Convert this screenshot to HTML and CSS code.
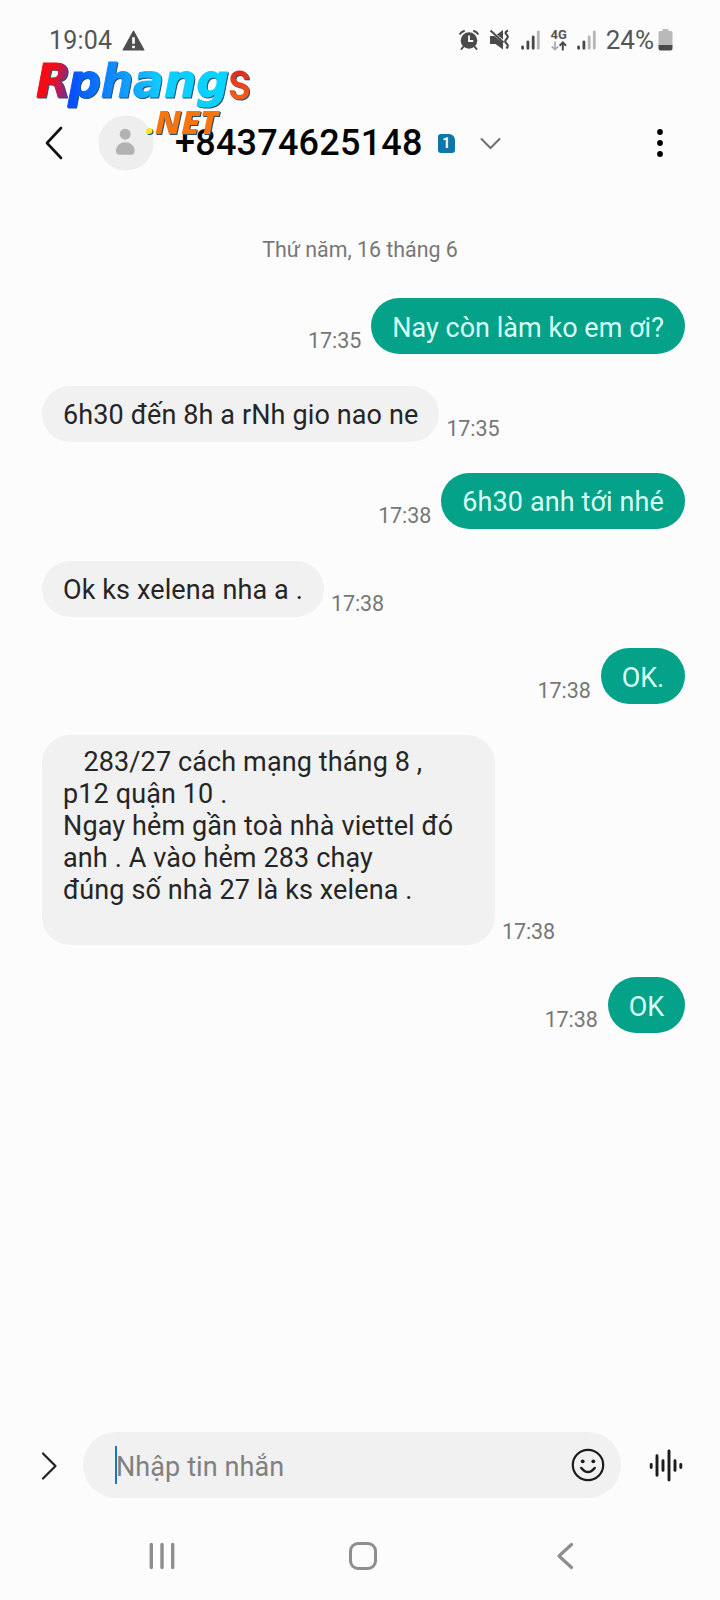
FILE: index.html
```html
<!DOCTYPE html>
<html lang="vi">
<head>
<meta charset="utf-8">
<title>+84374625148</title>
<link rel="stylesheet" href="styles.css">
</head>
<body>
<div class="status">
  <span class="clock">19:04</span>
  <svg class="warn" width="23" height="21" viewBox="0 0 22 20"><path d="M11 1 21 19H1Z" fill="#4e4e4e" stroke="#4e4e4e" stroke-linejoin="round"/><path d="M11 7v6M11 15v2.4" stroke="#fcfcfc" stroke-width="2.6"/></svg>
  <svg class="alarm" width="20" height="22" viewBox="0 0 20 22"><circle cx="10" cy="11.5" r="8.300" fill="#4a4a4a"/><path d="M1.200 4.800Q2.400 2.800 5 2M18.800 4.800Q17.600 2.800 15 2M4.500 17.500 2.500 20M15.500 17.500l2 2.500" fill="none" stroke="#4a4a4a" stroke-width="2" stroke-linecap="round"/><path d="M10 6.500v5.500h4.200" fill="none" stroke="#fcfcfc" stroke-width="1.800"/></svg>
  <svg class="mute" width="21" height="22" viewBox="0 0 21 22"><path d="M1 7h4.500l8.500 7v6.500L6.500 15H1ZM8 5.500 14 1v9.500Z" fill="#4a4a4a"/><path d="M1.500 1.500 14.500 13.500" stroke="#4a4a4a" stroke-width="2"/><path d="M19 1.500q-4 2 -1.500 4t0 4.500 0 4.500 0 5" fill="none" stroke="#4a4a4a" stroke-width="2.200"/></svg>
  <svg class="signal" width="19" height="20" viewBox="0 0 19 20" stroke-width="2.800" stroke-linecap="round"><path d="M1.600 17v1.300M6.900 12v6.300M12.200 7v11.300" stroke="#4a4a4a"/><path d="M17.300 2v16.300" stroke="#b5b5b5"/></svg>
  <span class="net"><span class="net-label">4G</span>
    <svg width="16" height="10" viewBox="0 0 16 10" fill="none" stroke-width="1.700"><path d="M4 .5v8M.8 5.300 4 8.600 7.200 5.300" stroke="#aaa"/><path d="M11.800 9.500v-8M8.600 4.700 11.800 1.400 15 4.700" stroke="#4a4a4a" stroke-width="2"/></svg>
  </span>
  <svg class="signal two" width="19" height="20" viewBox="0 0 19 20" stroke-width="2.800" stroke-linecap="round"><path d="M1.600 17v1.300M6.900 12v6.300" stroke="#4a4a4a"/><path d="M12.200 7v11.300M17.300 2v16.300" stroke="#b5b5b5"/></svg>
  <span class="percent">24%</span>
  <svg class="battery" width="15" height="22" viewBox="0 0 15 22"><path d="M4.500 0h6v2H13q1.500 0 1.500 1.500V17H.500V3.500Q.500 2 2 2h2.500Z" fill="#b9b9b9"/><path d="M.500 16h14v3.500q0 2-2 2h-10q-2 0-2-2Z" fill="#4a4a4a"/></svg>
</div>

<header class="header">
  <svg class="back" width="18" height="34" viewBox="0 0 18 34"><path d="M16 2 2 17l14 15" fill="none" stroke="#111" stroke-width="2.600" stroke-linecap="round" stroke-linejoin="round"/></svg>
  <svg class="avatar" width="56" height="56" viewBox="0 0 56 56"><circle cx="28" cy="28" r="27.500" fill="#eeeeee"/><circle cx="27.200" cy="19.200" r="5.500" fill="#b2b2b2"/><path d="M18 36C18 24.200 36.600 24.200 36.600 36Q36.600 39.700 33.500 39.700H21.200Q18 39.700 18 36Z" fill="#b2b2b2"/></svg>
  <h1 class="number">+84374625148</h1>
  <span class="sim">1</span>
  <svg class="chevron" width="21" height="13" viewBox="0 0 21 13"><path d="M1.500 2 10.500 11 19.500 2" fill="none" stroke="#6f6f6f" stroke-width="2" stroke-linecap="round"/></svg>
  <svg class="more" width="8" height="30" viewBox="0 0 8 30"><circle cx="4" cy="4" r="2.900"/><circle cx="4" cy="15" r="2.900"/><circle cx="4" cy="26" r="2.900"/></svg>
  <svg class="logo" width="230" height="84" viewBox="0 0 230 84">
    <defs>
      <linearGradient id="red" x1="0" x2="1" y1="0" y2=".4"><stop offset=".55" stop-color="#f20d16"/><stop offset="1" stop-color="#7b2c90"/></linearGradient>
      <linearGradient id="blue"><stop offset="0" stop-color="#0648ff"/><stop offset=".28" stop-color="#108bff"/><stop offset=".58" stop-color="#10ccff"/><stop offset="1" stop-color="#08d4ff"/></linearGradient>
      <linearGradient id="ess" x1="0" x2="0" y1="0" y2="1"><stop offset=".35" stop-color="#e02a20"/><stop offset="1" stop-color="#ff7810"/></linearGradient>
    </defs>
    <g class="logo-text">
      <text x="5" y="38" textLength="35" lengthAdjust="spacingAndGlyphs" font-size="46" fill="url(#red)" stroke="url(#red)">R</text>
      <text x="37" y="38" textLength="161" lengthAdjust="spacingAndGlyphs" font-size="46" fill="url(#blue)" stroke="url(#blue)">phang</text>
      <text class="logo-s" x="197" y="40" textLength="23" lengthAdjust="spacingAndGlyphs" font-size="51" fill="url(#ess)">s</text>
      <text class="logo-net" x="115" y="75" font-size="31" fill="#ffe91c">.</text>
      <text class="logo-net" x="124" y="75" textLength="63" lengthAdjust="spacingAndGlyphs" font-size="31" fill="#f9750b">NET</text>
    </g>
  </svg>
</header>

<main class="thread">
  <div class="date">Thứ năm, 16 tháng 6</div>
  <div class="row sent"><span class="time">17:35</span><div class="bubble tight">Nay còn làm ko em ơi?</div></div>
  <div class="row"><div class="bubble">6h30 đến 8h a rNh gio nao ne</div><span class="time">17:35</span></div>
  <div class="row sent"><span class="time">17:38</span><div class="bubble">6h30 anh tới nhé</div></div>
  <div class="row"><div class="bubble">Ok ks xelena nha a .</div><span class="time">17:38</span></div>
  <div class="row sent"><span class="time">17:38</span><div class="bubble short">OK.</div></div>
  <div class="row"><div class="bubble long">   283/27 cách mạng tháng 8 ,
p12 quận 10 .
Ngay hẻm gần toà nhà viettel đó
anh . A vào hẻm 283 chạy
đúng số nhà 27 là ks xelena .</div><span class="time">17:38</span></div>
  <div class="row sent"><span class="time">17:38</span><div class="bubble short">OK</div></div>
</main>

<div class="composer">
  <svg class="expand" width="17" height="30" viewBox="0 0 17 30"><path d="M2 2.500 14.500 15 2 27.500" fill="none" stroke="#222" stroke-width="2.200" stroke-linecap="round" stroke-linejoin="round"/></svg>
  <div class="field">
    <span class="caret"></span><span class="placeholder">Nhập tin nhắn</span>
    <svg width="34" height="34" viewBox="0 0 34 34" fill="none" stroke="#1c1c1c"><circle cx="17" cy="17" r="15.200" stroke-width="2.200"/><path d="M10.300 20Q17 28.200 23.700 20" stroke-width="2.500" stroke-linecap="round"/><circle cx="11.700" cy="13.300" r="1.900" fill="#1c1c1c" stroke="none"/><circle cx="22.300" cy="13.300" r="1.900" fill="#1c1c1c" stroke="none"/></svg>
  </div>
  <svg class="voice" width="34" height="34" viewBox="0 0 34 34"><path d="M2.200 15.500v3M8 6.800v19.400M14 11.800v9.600M20 2v29M26 11.800v9.600M31.800 15.500v3" stroke="#1c1c1c" stroke-width="2.900" stroke-linecap="round"/></svg>
</div>

<nav class="nav">
  <svg class="recents" width="28" height="28" viewBox="0 0 28 28"><path d="M3.300 2.500v23M14 2.500v23M24.700 2.500v23" stroke="#8e8e8e" stroke-width="3.400" stroke-linecap="round"/></svg>
  <svg class="home" width="30" height="30" viewBox="0 0 30 30"><rect x="2.500" y="2.500" width="25" height="25" rx="7.500" fill="none" stroke="#8e8e8e" stroke-width="3"/></svg>
  <svg class="return" width="18" height="28" viewBox="0 0 18 28"><path d="M15.500 2.500 3 14l12.500 11.500" fill="none" stroke="#8e8e8e" stroke-width="3.200" stroke-linecap="round" stroke-linejoin="round"/></svg>
</nav>
</body>
</html>
```

FILE: styles.css
```css
* { box-sizing: border-box; }

body {
  margin: 0;
  width: 720px;
  height: 1600px;
  display: flex;
  flex-direction: column;
  overflow: hidden;
  background: #fcfcfc;
  color: #252525;
  font-family: Roboto, "Liberation Sans", sans-serif;
}

svg { display: block; flex: none; }

.status {
  height: 80px;
  padding: 0 47px 0 49px;
  display: flex;
  align-items: center;
  color: #555;
  font-size: 25px;
}
.clock { letter-spacing: .2px; }
.warn { margin-left: 10px; }
.alarm { margin-left: auto; }
.mute { margin-left: 10px; }
.signal { margin-left: 11px; }
.net {
  width: 16px;
  margin-left: 11px;
  display: flex;
  flex-direction: column;
  align-items: center;
}
.net-label { font-size: 13px; font-weight: 700; line-height: 12px; }
.signal.two { margin-left: 10px; }
.percent { margin-left: 10px; font-size: 26px; }
.battery { margin-left: 4px; }

.header {
  position: relative;
  height: 126px;
  padding: 0 56px 0 45px;
  display: flex;
  align-items: center;
}
.avatar { margin-left: 35px; }
.number {
  margin: 0 0 0 21px;
  color: #050505;
  font-size: 36px;
  font-weight: 500;
  letter-spacing: .22px;
  line-height: 42px;
}
.sim {
  width: 17px;
  height: 19px;
  margin-left: 15px;
  border-radius: 3px 6px 3px 3px;
  background: #0b78a8;
  color: #fff;
  font-size: 14px;
  font-weight: 700;
  line-height: 19px;
  text-align: center;
}
.chevron { margin-left: 25px; }
.more { margin-left: auto; }

/* Watermark that lies over the header */
.logo {
  position: absolute;
  left: 31px;
  top: -21px;
  overflow: visible;
}
.logo-text {
  font-family: "DejaVu Sans", sans-serif;
  font-style: italic;
  font-weight: 700;
  filter: drop-shadow(1px 1px 0 #245070);
}
.logo-s { font-family: Roboto, sans-serif; font-style: normal; font-weight: 500; }
.logo-net { font-family: "Open Sans", sans-serif; font-weight: 800; }

.thread {
  flex: 1;
  padding: 31px 35px 0 42px;
  display: flex;
  flex-direction: column;
  gap: 31.4px;
}
.date {
  margin-bottom: 4px;
  padding-right: 7px;
  color: #777;
  font-size: 21.4px;
  line-height: 26px;
  text-align: center;
}
.row { display: flex; align-items: flex-end; gap: 7px; }
.row.sent { justify-content: flex-end; gap: 10px; }
.bubble {
  padding: 13px 21px 11px;
  border-radius: 28px;
  background: #f1f1f1;
  font-size: 27px;
  letter-spacing: .12px;
  line-height: 32px;
  white-space: pre;
}
.sent .bubble { background: #04a288; color: #d8fff6; }
.sent .bubble.tight { padding: 14px 21px 10px; letter-spacing: .03px; }
.sent .bubble.short { padding: 14px 21px 10px; letter-spacing: -.1px; }
.bubble.long { width: 453px; height: 210px; padding-top: 11px; }
.time { padding-bottom: 1px; color: #777; font-size: 21.5px; letter-spacing: -.1px; line-height: 25px; }

.composer {
  height: 66px;
  padding: 0 37px 0 41px;
  display: flex;
  align-items: center;
}
.expand, .voice { margin-top: 1px; }
.field {
  width: 538px;
  height: 66px;
  margin: 0 28px 0 25px;
  padding: 0 16px 0 32px;
  border-radius: 33px;
  background: #f1f1f1;
  display: flex;
  align-items: center;
}
.caret { width: 2px; height: 38px; background: #1479c4; }
.placeholder { flex: 1; margin-left: -1px; padding-top: 3px; color: #808080; font-size: 27px; letter-spacing: .1px; }

.nav {
  height: 102px;
  padding: 14px 146px 0 148px;
  display: flex;
  align-items: center;
  justify-content: space-between;
}
.home { margin-right: 6px; }
```
